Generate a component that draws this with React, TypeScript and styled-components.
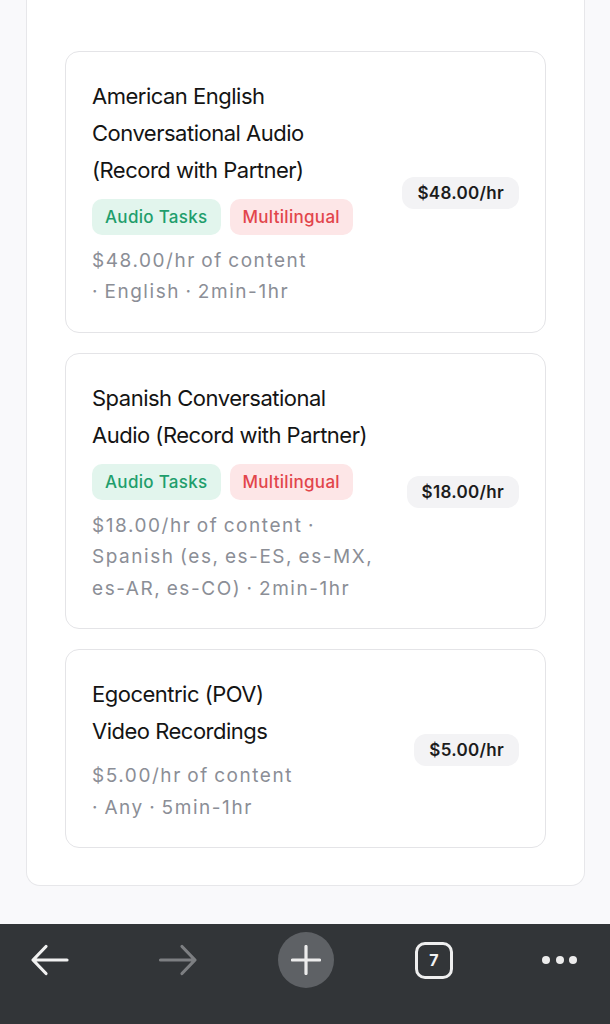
import React from "react";
import styled, { createGlobalStyle } from "styled-components";

const GlobalStyle = createGlobalStyle`
  html, body { margin: 0; padding: 0; }
  body {
    background: #f9f9fb;
    font-family: Inter, "Noto Sans", "Liberation Sans", sans-serif;
    -webkit-font-smoothing: antialiased;
  }
  * { box-sizing: border-box; }
`;

const Screen = styled.div`
  height: 1024px;
  display: flex;
  flex-direction: column;
  overflow: hidden;
`;

const Content = styled.main`
  flex: 1;
  min-height: 0;
  padding: 0 25px 38px 26px;
  display: flex;
  flex-direction: column;
  justify-content: flex-end;
  overflow: hidden;
`;

const Panel = styled.section`
  background: #ffffff;
  border: 1px solid #e7e7ea;
  border-top: none;
  border-radius: 0 0 14px 14px;
  padding: 51px 38px 37px 38px;
  display: flex;
  flex-direction: column;
  gap: 20px;
`;

const Card = styled.article`
  border: 1px solid #e4e4e7;
  border-radius: 14px;
  background: #ffffff;
  padding: 26px 26px 24px 26px;
  display: flex;
  align-items: center;
  gap: 12px;
`;

const Info = styled.div`
  flex: 1;
  min-width: 0;
  display: flex;
  flex-direction: column;
`;

const Title = styled.h3`
  margin: 0;
  font-size: 22px;
  font-weight: 400;
  line-height: 37px;
  letter-spacing: -0.5px;
  color: #141414;
`;

const Line = styled.span`
  display: block;
  white-space: nowrap;
`;

const Tags = styled.div`
  display: flex;
  gap: 9px;
  margin-top: 10px;
`;

const Tag = styled.span<{ $tone: "green" | "red" }>`
  height: 36px;
  padding: 0 13px;
  border-radius: 10px;
  display: inline-flex;
  align-items: center;
  font-size: 17px;
  font-weight: 500;
  letter-spacing: 0.3px;
  background: ${(p) => (p.$tone === "green" ? "#e2f5ed" : "#fde6e7")};
  color: ${(p) => (p.$tone === "green" ? "#1f9e6c" : "#e2454b")};
`;

const Meta = styled.p`
  margin: 10px 0 0 0;
  font-size: 19px;
  line-height: 31.5px;
  letter-spacing: 1.55px;
  word-spacing: -1.5px;
  color: #8b8e96;
`;

const Price = styled.span`
  flex: none;
  height: 32px;
  padding: 0 15px;
  border-radius: 12px;
  background: #f3f3f5;
  display: inline-flex;
  align-items: center;
  font-size: 17px;
  font-weight: 600;
  letter-spacing: 0.3px;
  color: #1c1c1c;
`;

const Toolbar = styled.nav`
  flex: none;
  height: 100px;
  background: #323538;
  display: flex;
  align-items: flex-start;
  padding: 8px 33px 0 22px;
  gap: 72px;
`;

const ToolButton = styled.div<{ $push?: boolean }>`
  width: 56px;
  height: 56px;
  display: flex;
  align-items: center;
  justify-content: center;
  ${(p) => (p.$push ? "margin-left: auto; width: auto;" : "")}
`;

const NewTab = styled(ToolButton)`
  border-radius: 50%;
  background: #5e6165;
`;

const TabCount = styled.div`
  width: 38px;
  height: 37px;
  border: 3px solid #efefef;
  border-radius: 10px;
  display: flex;
  align-items: center;
  justify-content: center;
  color: #f2f2f2;
  font-size: 16px;
  font-weight: 700;
`;

const Dots = styled.div`
  display: flex;
  gap: 5.5px;
`;

const Dot = styled.span`
  width: 8px;
  height: 8px;
  border-radius: 50%;
  background: #ececec;
`;

type Job = {
  title: string[];
  tags: boolean;
  meta: string[];
  price: string;
};

const jobs: Job[] = [
  {
    title: ["American English", "Conversational Audio", "(Record with Partner)"],
    tags: true,
    meta: ["$48.00/hr of content", "· English · 2min-1hr"],
    price: "$48.00/hr",
  },
  {
    title: ["Spanish Conversational", "Audio (Record with Partner)"],
    tags: true,
    meta: [
      "$18.00/hr of content ·",
      "Spanish (es, es-ES, es-MX,",
      "es-AR, es-CO) · 2min-1hr",
    ],
    price: "$18.00/hr",
  },
  {
    title: ["Egocentric (POV)", "Video Recordings"],
    tags: false,
    meta: ["$5.00/hr of content", "· Any · 5min-1hr"],
    price: "$5.00/hr",
  },
];

const BackIcon = ({ color }: { color: string }) => (
  <svg width="56" height="56" viewBox="0 0 56 56" fill="none">
    <path
      d="M45 28H11.5M24 14.5L11 28L24 41.5"
      stroke={color}
      strokeWidth="3.2"
      strokeLinecap="round"
      strokeLinejoin="round"
    />
  </svg>
);

const ForwardIcon = ({ color }: { color: string }) => (
  <svg width="56" height="56" viewBox="0 0 56 56" fill="none">
    <path
      d="M10.5 28H44.5M32 14.5L45 28L32 41.5"
      stroke={color}
      strokeWidth="3.2"
      strokeLinecap="round"
      strokeLinejoin="round"
    />
  </svg>
);

const PlusIcon = () => (
  <svg width="30" height="30" viewBox="0 0 30 30" fill="none">
    <path
      d="M15 1.5V28.5M1.5 15H28.5"
      stroke="#ececec"
      strokeWidth="3.2"
      strokeLinecap="round"
    />
  </svg>
);

export default function App() {
  return (
    <>
      <GlobalStyle />
      <Screen>
        <Content>
          <Panel>
            {jobs.map((job) => (
              <Card key={job.price}>
                <Info>
                  <Title>
                    {job.title.map((t) => (
                      <Line key={t}>{t}</Line>
                    ))}
                  </Title>
                  {job.tags && (
                    <Tags>
                      <Tag $tone="green">Audio Tasks</Tag>
                      <Tag $tone="red">Multilingual</Tag>
                    </Tags>
                  )}
                  <Meta>
                    {job.meta.map((m) => (
                      <Line key={m}>{m}</Line>
                    ))}
                  </Meta>
                </Info>
                <Price>{job.price}</Price>
              </Card>
            ))}
          </Panel>
        </Content>
        <Toolbar>
          <ToolButton>
            <BackIcon color="#f1f1f1" />
          </ToolButton>
          <ToolButton>
            <ForwardIcon color="#7d7f82" />
          </ToolButton>
          <NewTab>
            <PlusIcon />
          </NewTab>
          <ToolButton>
            <TabCount>7</TabCount>
          </ToolButton>
          <ToolButton $push>
            <Dots>
              <Dot />
              <Dot />
              <Dot />
            </Dots>
          </ToolButton>
        </Toolbar>
      </Screen>
    </>
  );
}
